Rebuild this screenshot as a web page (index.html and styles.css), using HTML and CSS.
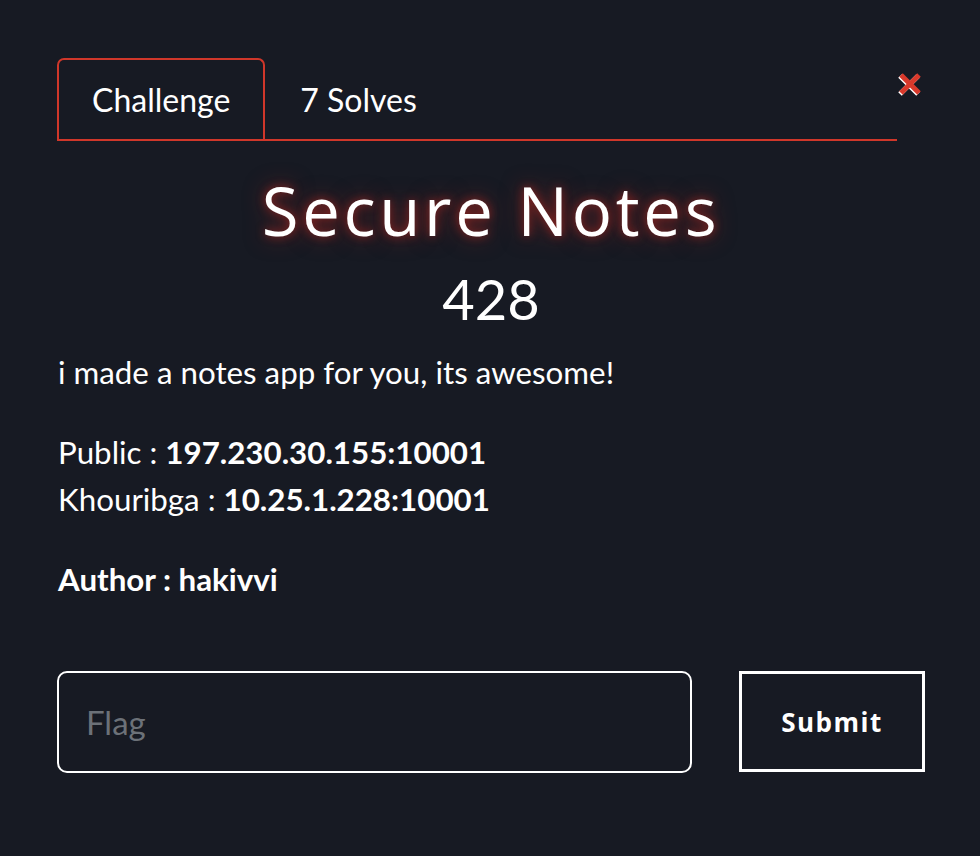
FILE: index.html
```html
<!DOCTYPE html>
<html>
<head>
<meta charset="utf-8">
<link rel="stylesheet" href="styles.css">
</head>
<body>
<div class="modal">
  <div class="header">
    <div class="tabs">
      <div class="tab active">Challenge</div>
      <div class="tab">7 Solves</div>
    </div>
    <div class="close" aria-label="Close">
      <svg width="28" height="28" viewBox="0 0 28 28">
        <g stroke="#ffffff" stroke-width="5" transform="translate(-1,1)">
          <path d="M5 5 L23 23 M23 5 L5 23"/>
        </g>
        <g stroke="#d9392b" stroke-width="5">
          <path d="M5 5 L23 23 M23 5 L5 23"/>
        </g>
      </svg>
    </div>
  </div>
  <h1 class="title">Secure Notes</h1>
  <div class="points">428</div>
  <p class="desc first">i made a notes app for you, its awesome!</p>
  <p class="desc">Public : <b>197.230.30.155:10001</b><br>Khouribga : <b>10.25.1.228:10001</b></p>
  <p class="desc"><b>Author : hakivvi</b></p>
  <form class="submit-row">
    <input class="flag" type="text" placeholder="Flag">
    <button class="submit" type="button">Submit</button>
  </form>
</div>
</body>
</html>
```
FILE: styles.css
```css
html, body {
  margin: 0;
  background: #171a23;
  color: #ffffff;
  font-family: Lato, "Open Sans", sans-serif;
}
.modal {
  padding: 58px 55px 0 57px;
}
.header {
  display: flex;
  align-items: flex-start;
}
.tabs {
  width: 840px;
  flex: 0 0 840px;
  display: flex;
  border-bottom: 2px solid #d0372a;
}
.tab {
  font-size: 32px;
  line-height: 79px;
  padding: 0 33px;
  border: 2px solid transparent;
  border-bottom: none;
  height: 81px;
  box-sizing: border-box;
}
.tab.active {
  border-color: #d0372a;
  border-radius: 7px 7px 0 0;
}
.close {
  margin: 12px 0 0 -1px;
  line-height: 0;
}
.title {
  margin: 36px 0 0;
  text-align: center;
  font-family: "Open Sans", sans-serif;
  font-weight: 400;
  font-size: 67px;
  letter-spacing: 3.7px;
  line-height: 1;
  text-shadow: 0 0 10px rgba(210, 45, 35, 0.6), 0 0 22px rgba(200, 40, 30, 0.55);
}
.points {
  text-align: center;
  font-size: 56px;
  line-height: 1;
  margin-top: 27px;
}
.desc {
  font-size: 31.3px;
  line-height: 47px;
  margin: 33px 0 0 1px;
}
.desc.first {
  margin-top: 22px;
}
.submit-row {
  display: flex;
  gap: 47px;
  margin-top: 68px;
}
.flag {
  width: 635px;
  flex: 0 0 635px;
  height: 102px;
  box-sizing: border-box;
  background: transparent;
  border: 2px solid #ffffff;
  border-radius: 10px;
  color: #fff;
  font-family: Lato, sans-serif;
  font-weight: 400;
  font-size: 33px;
  padding: 0 27px;
  outline: none;
}
.flag::placeholder {
  color: #6c7178;
}
.submit {
  width: 186px;
  flex: 0 0 186px;
  height: 101px;
  box-sizing: border-box;
  background: transparent;
  border: 3px solid #ffffff;
  color: #fff;
  font-family: "Open Sans", sans-serif;
  font-weight: 700;
  font-size: 26px;
  letter-spacing: 1.5px;
}
```
